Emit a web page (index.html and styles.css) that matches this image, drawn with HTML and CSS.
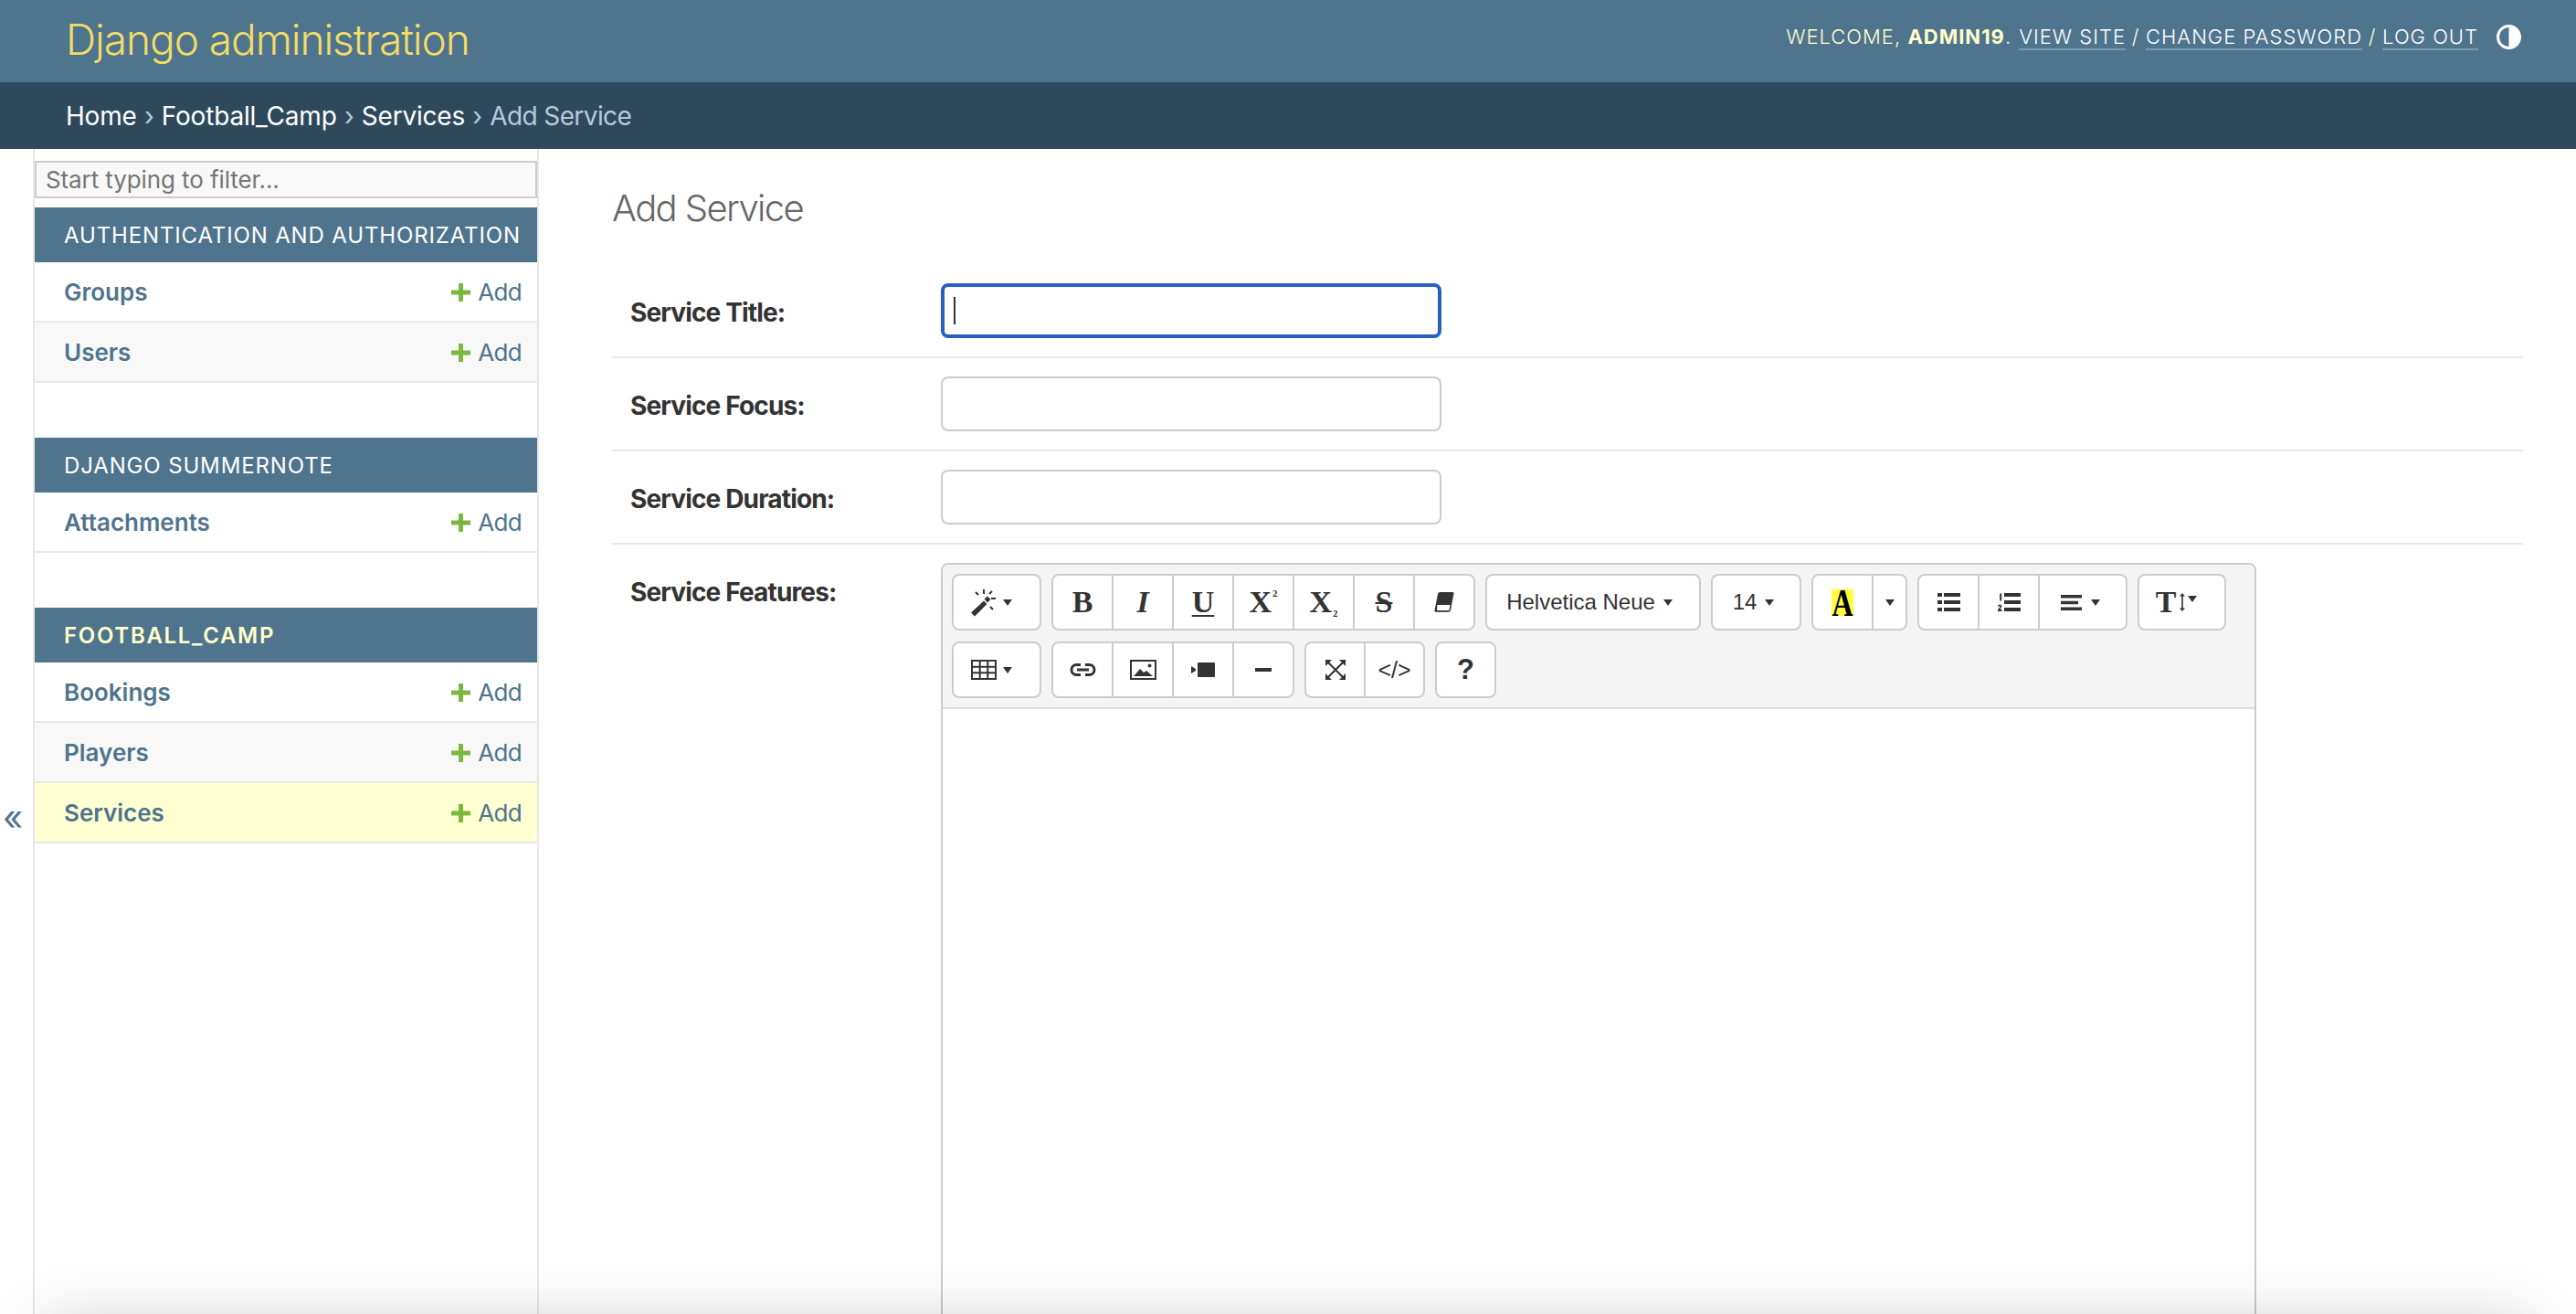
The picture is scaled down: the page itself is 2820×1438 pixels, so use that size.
FILE: index.html
```html
<!DOCTYPE html>
<html lang="en">
<head>
<meta charset="utf-8">
<title>Add Service | Django site admin</title>
<link rel="stylesheet" href="styles.css">
</head>
<body>
<header class="header">
  <a class="brand">Django administration</a>
  <div class="tools">
    <span class="welcome">Welcome, <strong>admin19</strong>.</span>
    <a class="tool">View site</a><span class="slash">/</span><a class="tool">Change password</a><span class="slash">/</span><a class="tool">Log out</a>
    <svg class="theme" viewBox="0 0 27 27"><circle cx="13.5" cy="13.5" r="12" fill="none" stroke="#fff" stroke-width="3"/><path d="M13.5 1.5a12 12 0 0 1 0 24z" fill="#fff"/></svg>
  </div>
</header>
<nav class="crumbs">
  <a>Home</a><span class="sep">›</span><a>Football_Camp</a><span class="sep">›</span><a>Services</a><span class="sep">›</span><span class="here">Add Service</span>
</nav>
<div class="body-wrap">
  <div class="toggle">«</div>
  <aside class="sidebar">
    <div class="filter">Start typing to filter...</div>
    <section class="module">
      <h2 class="caption">Authentication and Authorization</h2>
      <div class="row"><a class="model">Groups</a><a class="add"><svg class="plus" viewBox="0 0 21 20"><path d="M8 0h5v7.500h8v5h-8V20H8v-7.500H0v-5h8z"/></svg>Add</a></div>
      <div class="row alt"><a class="model">Users</a><a class="add"><svg class="plus" viewBox="0 0 21 20"><path d="M8 0h5v7.500h8v5h-8V20H8v-7.500H0v-5h8z"/></svg>Add</a></div>
    </section>
    <section class="module">
      <h2 class="caption">Django Summernote</h2>
      <div class="row"><a class="model">Attachments</a><a class="add"><svg class="plus" viewBox="0 0 21 20"><path d="M8 0h5v7.500h8v5h-8V20H8v-7.500H0v-5h8z"/></svg>Add</a></div>
    </section>
    <section class="module">
      <h2 class="caption current">Football_Camp</h2>
      <div class="row"><a class="model">Bookings</a><a class="add"><svg class="plus" viewBox="0 0 21 20"><path d="M8 0h5v7.500h8v5h-8V20H8v-7.500H0v-5h8z"/></svg>Add</a></div>
      <div class="row alt"><a class="model">Players</a><a class="add"><svg class="plus" viewBox="0 0 21 20"><path d="M8 0h5v7.500h8v5h-8V20H8v-7.500H0v-5h8z"/></svg>Add</a></div>
      <div class="row active"><a class="model">Services</a><a class="add"><svg class="plus" viewBox="0 0 21 20"><path d="M8 0h5v7.500h8v5h-8V20H8v-7.500H0v-5h8z"/></svg>Add</a></div>
    </section>
  </aside>
  <main class="main">
    <h1 class="title">Add Service</h1>
    <div class="form-row">
      <label class="label">Service Title:</label>
      <div class="input focus"><span class="caret"></span></div>
    </div>
    <div class="form-row">
      <label class="label">Service Focus:</label>
      <div class="input"></div>
    </div>
    <div class="form-row">
      <label class="label">Service Duration:</label>
      <div class="input"></div>
    </div>
    <div class="form-row last">
      <label class="label">Service Features:</label>
      <div class="editor">
        <div class="toolbar">
          <div class="tb-row">
            <div class="group"><span class="btn wide">
              <svg width="28" height="32" viewBox="0 0 28 32"><path d="M0 27.500 14 14.500 17.500 18 4 31.500z" fill="#333"/><path d="M14.500 12.500 18 9.500 21.500 13 18 16.500z" fill="#333"/><path d="M14 2v5M5 5l3 3M23 4l-3 3M21 21l3 3M22 12h5" stroke="#333" stroke-width="2" fill="none"/></svg><i class="dd near"></i></span></div>
            <div class="group">
              <span class="btn serif">B</span><span class="btn serif it">I</span><span class="btn serif"><span class="un">U</span></span><span class="btn serif">X<span class="sm up">2</span></span><span class="btn serif">X<span class="sm down">2</span></span><span class="btn serif"><span class="st">S</span></span>
              <span class="btn"><svg width="22" height="24" viewBox="0 0 22 24"><path d="M6 1h14a1.500 1.500 0 0 1 1.500 1.800l-3.500 18a2.500 2.500 0 0 1-2.400 2H2a1.500 1.500 0 0 1-1.500-1.800L4 3a2.500 2.500 0 0 1 2-2z" fill="#333"/><path d="M3.500 15h14L16.500 21H3z" fill="#fff"/></svg></span>
            </div>
            <div class="group"><span class="btn sans w-font">Helvetica Neue<i class="dd sp"></i></span></div>
            <div class="group"><span class="btn sans w-size">14<i class="dd sp"></i></span></div>
            <div class="group">
              <span class="btn"><span class="hl"><span class="hl-a">A</span></span></span><span class="btn w-narrow"><i class="dd none"></i></span>
            </div>
            <div class="group">
              <span class="btn"><svg width="25" height="20" viewBox="0 0 25 20"><path d="M0 0h5v4H0zM7 0h18v4H7zM0 8h5v4H0zM7 8h18v4H7zM0 16h5v4H0zM7 16h18v4H7z" fill="#333"/></svg></span>
              <span class="btn"><svg width="25" height="20" viewBox="0 0 25 20"><path d="M7 0h18v4H7zM7 8h18v4H7zM7 16h18v4H7z" fill="#333"/><path d="M2.200 1 4.200 0v8.500H2.200zM0 20v-1.800l2.300-2.700c.600-.800.300-1.300-.300-1.300-.500 0-.800.300-1 .900L0 14.500C.300 13.300 1 12.500 2.200 12.500c2 0 2.800 1.700 1.700 3.300L2.500 18h2v2z" fill="#333"/></svg></span>
              <span class="btn w-align"><svg width="23" height="17" viewBox="0 0 23 17"><path d="M0 0h23v3.500H0zM0 6.800h19v3.500H0zM0 13.500h23V17H0z" fill="#333"/></svg><i class="dd sp2"></i></span>
            </div>
            <div class="group"><span class="btn w-height"><span class="tt">T</span><svg class="updown" width="6" height="20" viewBox="0 0 6 20"><path d="M3 0 6 3.500H3.800v13H6L3 20 0 16.500h2.200v-13H0z" fill="#333"/></svg><i class="dd raised"></i></span></div>
          </div>
          <div class="tb-row">
            <div class="group"><span class="btn wide"><svg width="28" height="22" viewBox="0 0 28 22"><path d="M1 1h26v20H1zM1 7.700h26M1 14.300h26M9.700 1v20M18.300 1v20" fill="none" stroke="#333" stroke-width="2"/></svg><i class="dd near"></i></span></div>
            <div class="group">
              <span class="btn"><svg width="29" height="14" viewBox="0 0 29 14"><path d="M12 1.500H7.500a5.500 5.500 0 0 0 0 11H12M17 1.500h4.500a5.500 5.500 0 0 1 0 11H17M8 7h13" fill="none" stroke="#333" stroke-width="3"/></svg></span>
              <span class="btn"><svg width="29" height="22" viewBox="0 0 29 22"><path d="M1 1h27v20H1z" fill="none" stroke="#333" stroke-width="2"/><path d="M4 18l7-8 4 4 3-2 7 6z" fill="#333"/><circle cx="21.500" cy="6.500" r="2" fill="#333"/></svg></span>
              <span class="btn"><svg width="26" height="16" viewBox="0 0 26 16"><path d="M7 1a1 1 0 0 1 1-1h17a1 1 0 0 1 1 1v14a1 1 0 0 1-1 1H8a1 1 0 0 1-1-1zM0 4l5 3v2l-5 3z" fill="#333"/></svg></span>
              <span class="btn"><svg width="18" height="4" viewBox="0 0 18 4"><path d="M0 0h18v4H0z" fill="#333"/></svg></span>
            </div>
            <div class="group">
              <span class="btn w-67"><svg width="22" height="22" viewBox="0 0 22 22"><path d="M0 0h7L0 7zM22 0v7l-7-7zM0 22v-7l7 7zM22 22h-7l7-7z" fill="#333"/><path d="M3 3l16 16M19 3 3 19" stroke="#333" stroke-width="2" fill="none"/></svg></span>
              <span class="btn w-67 code">&lt;/&gt;</span>
            </div>
            <div class="group"><span class="btn w-67 help">?</span></div>
          </div>
        </div>
        <div class="editable"></div>
      </div>
    </div>
  </main>
</div>
<div class="edge-shadow"></div>
</body>
</html>
```

FILE: styles.css
```css
* { box-sizing: border-box; }
html, body { margin: 0; height: 100%; }
body {
  height: 1438px;
  overflow: hidden;
  background: #fff;
  color: #333;
  font-family: Inter, "Noto Sans", sans-serif;
  display: flex;
  flex-direction: column;
}
.header {
  height: 90px;
  flex: none;
  background: #4f748d;
  display: flex;
  align-items: center;
  justify-content: space-between;
  padding: 0 60px 0 72px;
}
.brand {
  font-size: 46px;
  font-weight: 300;
  letter-spacing: -1.05px;
  color: #f2dc68;
  margin-top: -4px;
}
.tools {
  display: flex;
  align-items: center;
  font-size: 22px;
  letter-spacing: 1px;
  text-transform: uppercase;
  color: #ffffcc;
  font-weight: 300;
  margin-top: -10px;
}
.welcome { margin-right: 8px; }
.welcome strong { font-weight: 700; }
.tool {
  color: #fff;
  border-bottom: 2px solid #7c98ad;
  line-height: 26px;
  margin-top: 2px;
}
.slash { margin: 0 6.7px; }
.theme { width: 27px; height: 27px; margin-left: 20px; }
.crumbs {
  height: 73px;
  flex: none;
  background: #2f495c;
  color: #b6cbd9;
  font-size: 28px;
  display: flex;
  align-items: center;
  padding: 0 72px;
  letter-spacing: -0.2px;
}
.crumbs a { color: #fff; }
.crumbs .sep { margin: 0 8.3px; }
.here { color: #b6cbd9; letter-spacing: -0.6px; }
.body-wrap { flex: 1; display: flex; min-height: 0; }
.toggle {
  width: 36px;
  flex: none;
  color: #4f748d;
  font-size: 38px;
  line-height: 44px;
  padding: 709px 0 0 3px;
}
.sidebar {
  width: 554px;
  flex: none;
  border-left: 2px solid #e8e8e8;
  border-right: 2px solid #e8e8e8;
  padding-top: 13px;
}
.filter {
  height: 41px;
  margin-bottom: 10px;
  padding: 0 10px;
  background: #f8f8f8;
  border: 2px solid #ccc;
  color: #757575;
  font-size: 26px;
  line-height: 37px;
  letter-spacing: -0.1px;
}
.module { margin-bottom: 60px; }
.caption {
  margin: 0;
  height: 60px;
  background: #4f748d;
  color: #fff;
  font-size: 24px;
  font-weight: 400;
  letter-spacing: 0.85px;
  text-transform: uppercase;
  line-height: 62px;
  padding-left: 32px;
}
.caption.current { color: #ffffcc; font-weight: 600; letter-spacing: 1.7px; }
.row {
  height: 66px;
  display: flex;
  justify-content: space-between;
  align-items: center;
  padding: 1px 17px 0 32px;
  border-bottom: 2px solid #e8e8e8;
  color: #4f748d;
  font-size: 26px;
}
.row.alt { background: #f8f8f8; }
.row.active { background: #ffffd2; }
.model { font-weight: 600; }
.add { display: flex; align-items: center; letter-spacing: -0.7px; }
.plus { width: 21px; height: 20px; fill: #7ab840; margin-right: 8px; }
.main { flex: 1; min-width: 0; padding: 0 58px 0 80px; }
.title {
  margin: 0;
  height: 127px;
  font-size: 40px;
  font-weight: 300;
  color: #666;
  line-height: 130px;
  letter-spacing: -1.6px;
}
.form-row {
  display: flex;
  padding: 20px 0;
  border-bottom: 2px solid #e8e8e8;
}
.form-row.last { border-bottom: 0; }
.label {
  width: 360px;
  padding: 17px 0 0 20px;
  font-size: 28px;
  line-height: 30px;
  font-weight: 700;
  color: #333;
  flex: none;
  letter-spacing: -0.85px;
}
.input {
  width: 548px;
  height: 60px;
  border: 2px solid #ccc;
  border-radius: 8px;
  background: #fff;
  display: flex;
  align-items: center;
  padding-left: 10px;
}
.input.focus { border: 4px solid #2a5fc2; }
.caret { width: 2px; height: 30px; background: #333; }
.editor {
  width: 1440px;
  border: 2px solid #ccc;
  border-radius: 8px;
}
.toolbar {
  background: #f4f4f4;
  padding: 10px;
  border-bottom: 2px solid #ddd;
  border-radius: 6px 6px 0 0;
  display: flex;
  flex-direction: column;
  gap: 12px;
}
.tb-row { display: flex; gap: 11px; }
.group { display: flex; }
.btn {
  width: 68px;
  height: 62px;
  margin-left: -2px;
  border: 2px solid #ccc;
  background: #fff;
  display: flex;
  align-items: center;
  justify-content: center;
  color: #333;
}
.group .btn:first-child { margin-left: 0; border-radius: 8px 0 0 8px; }
.group .btn:last-child { border-radius: 0 8px 8px 0; }
.group .btn:only-child { border-radius: 8px; }
.wide { width: 98px; padding-right: 12px; }
.dd {
  display: inline-block;
  width: 0;
  height: 0;
  margin-left: 12px;
  border-left: 5.5px solid transparent;
  border-right: 5.5px solid transparent;
  border-top: 7px solid #333;
}
.dd.near { margin-left: 7px; }
.dd.sp { margin-left: 9px; }
.dd.sp2 { margin-left: 10px; }
.dd.none { margin-left: 0; }
.dd.raised { margin: -8px 0 0 3px; }
.serif { font-family: "Liberation Serif", serif; font-weight: 700; font-size: 34px; }
.it { font-style: italic; }
.un { text-decoration: underline; text-decoration-thickness: 2px; text-underline-offset: 3px; }
.st { text-decoration: line-through; text-decoration-thickness: 2px; }
.sm { font-size: 11px; align-self: center; margin-left: 1px; }
.up { margin-top: -20px; }
.down { margin-top: 24px; }
.sans { font-family: "Liberation Sans", sans-serif; font-size: 24px; }
.w-font { width: 236px; padding-right: 8px; }
.w-size { width: 99px; padding-right: 6px; }
.w-narrow { width: 39px; }
.w-align { width: 98px; padding-right: 6px; }
.w-height { width: 97px; padding-right: 12px; }
.w-67 { width: 67px; }
.hl {
  background: #ffff40;
  color: #000;
  font-family: "Liberation Serif", serif;
  font-weight: 700;
  width: 24px;
  height: 29px;
  display: flex;
  justify-content: center;
}
.hl-a { font-size: 32px; transform: scaleY(1.3); line-height: 30px; }
.tt { font-family: "Liberation Serif", serif; font-weight: 700; font-size: 34px; }
.updown { margin-left: 4px; }
.code { font-family: "Liberation Sans", sans-serif; font-size: 25px; }
.help { font-family: "Liberation Sans", sans-serif; font-weight: 700; font-size: 31px; }
.editable { height: 800px; background: #fff; }
.edge-shadow {
  position: fixed;
  left: 40px;
  right: 40px;
  top: 1438px;
  height: 100px;
  border-radius: 40px;
  box-shadow: 0 0 60px rgba(0, 0, 0, 0.16);
}
```
